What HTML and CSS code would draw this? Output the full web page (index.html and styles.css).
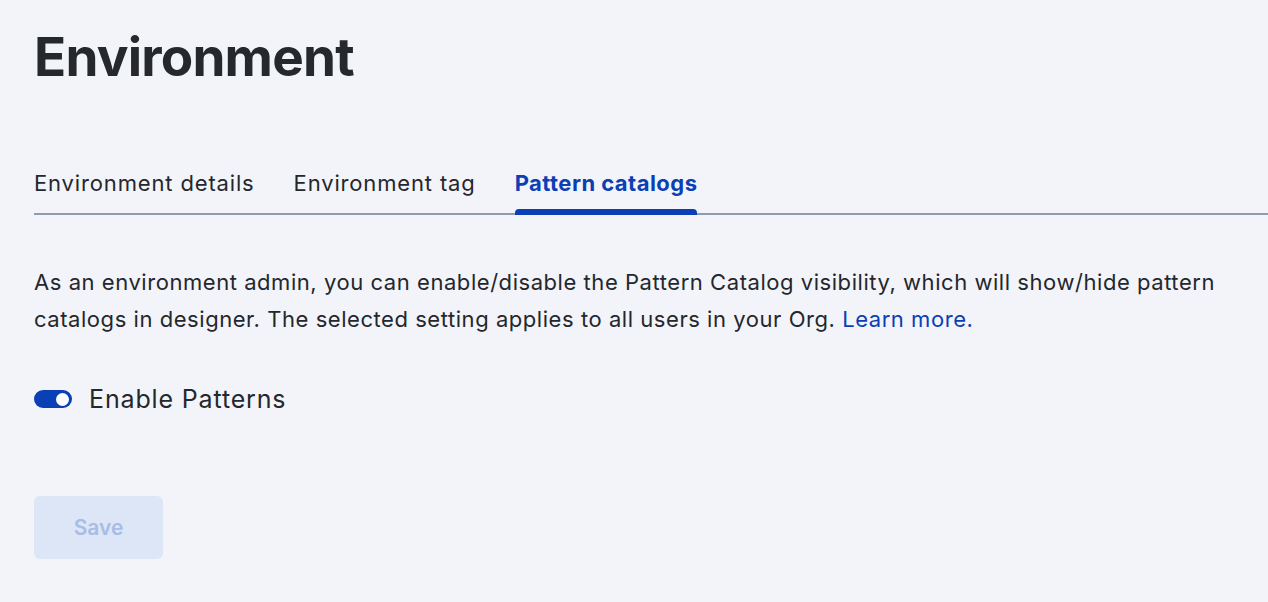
FILE: index.html
```html
<!DOCTYPE html>
<html>
<head>
<meta charset="utf-8">
<link rel="stylesheet" href="styles.css">
</head>
<body>
<main class="page">
  <h1 class="title">Environment</h1>
  <nav class="tabs">
    <a class="tab">Environment details</a>
    <a class="tab">Environment tag</a>
    <a class="tab tab-active">Pattern catalogs</a>
  </nav>
  <p class="desc">As an environment admin, you can enable/disable the Pattern Catalog visibility, which will show/hide pattern catalogs in designer. The selected setting applies to all users in your Org. <a class="link">Learn more.</a></p>
  <label class="toggle-row">
    <span class="toggle"><span class="knob"></span></span>
    <span class="toggle-label">Enable Patterns</span>
  </label>
  <button class="save" disabled>Save</button>
</main>
</body>
</html>
```
FILE: styles.css
```css
html, body {
  margin: 0;
  padding: 0;
  background: #f3f4f9;
}
body {
  font-family: "Inter", "Noto Sans", sans-serif;
  color: #24272c;
}
.page {
  padding: 22px 0 0 34px;
  display: flex;
  flex-direction: column;
  align-items: flex-start;
}
.title {
  margin: 0;
  font-size: 53px;
  font-weight: 700;
  line-height: 70px;
  letter-spacing: -0.8px;
  color: #25282d;
}
.tabs {
  margin-top: 78px;
  align-self: stretch;
  display: flex;
  gap: 39px;
  border-bottom: 2px solid #8e9bb3;
}
.tab {
  font-size: 22px;
  line-height: 26px;
  letter-spacing: 0.85px;
  padding-bottom: 17px;
  position: relative;
  color: #24272c;
}
.tab-active {
  color: #0a3fb5;
  font-weight: 700;
  letter-spacing: 0.45px;
}
.tab-active::after {
  content: "";
  position: absolute;
  left: 0;
  right: 0;
  bottom: -2px;
  height: 6px;
  background: #0a3fb5;
  border-radius: 4px 4px 0 0;
}
.desc {
  margin: 49px 0 0 0;
  max-width: 1200px;
  font-size: 22px;
  line-height: 37px;
  letter-spacing: 0.55px;
}
.link {
  color: #0a3fb5;
}
.toggle-row {
  margin-top: 46px;
  display: flex;
  align-items: center;
  gap: 17px;
}
.toggle {
  width: 38px;
  height: 18px;
  border-radius: 9px;
  background: #0a3fb5;
  display: flex;
  align-items: center;
  justify-content: flex-end;
  padding: 0 3px;
  box-sizing: border-box;
}
.knob {
  width: 13px;
  height: 13px;
  border-radius: 50%;
  background: #fff;
}
.toggle-label {
  font-size: 25px;
  line-height: 30px;
  letter-spacing: 0.85px;
}
.save {
  margin-top: 82px;
  width: 129px;
  height: 63px;
  border: none;
  border-radius: 6px;
  background: #dde6f6;
  color: #a8bce6;
  font-family: inherit;
  font-size: 21px;
  font-weight: 600;
}
```
